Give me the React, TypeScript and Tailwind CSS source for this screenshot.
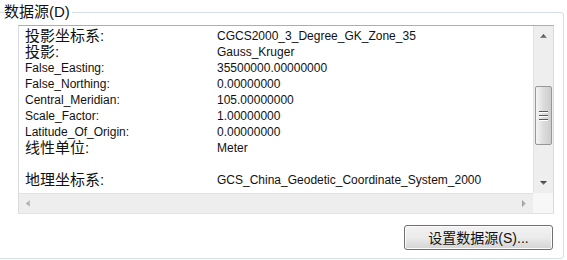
import React from 'react';

const ROWS: { label: string; value: string; cjk?: boolean }[] = [
    { label: '投影坐标系:', value: 'CGCS2000_3_Degree_GK_Zone_35', cjk: true },
    { label: '投影:', value: 'Gauss_Kruger', cjk: true },
    { label: 'False_Easting:', value: '35500000.00000000' },
    { label: 'False_Northing:', value: '0.00000000' },
    { label: 'Central_Meridian:', value: '105.00000000' },
    { label: 'Scale_Factor:', value: '1.00000000' },
    { label: 'Latitude_Of_Origin:', value: '0.00000000' },
    { label: '线性单位:', value: 'Meter', cjk: true },
    { label: '', value: '' },
    { label: '地理坐标系:', value: 'GCS_China_Geodetic_Coordinate_System_2000', cjk: true },
];

const Arrow: React.FC<{ dir: 'up' | 'down' | 'left' | 'right' }> = ({ dir }) => {
    const pts = {
        up: '0,4 7,4 3.5,0',
        down: '0,0 7,0 3.5,4',
        left: '4,0 4,7 0,3.5',
        right: '0,0 0,7 4,3.5',
    }[dir];
    const vertical = dir === 'up' || dir === 'down';
    return (
        <svg width={vertical ? 7 : 4} height={vertical ? 4 : 7} viewBox={vertical ? '0 0 7 4' : '0 0 4 7'}>
            <defs>
                <linearGradient id={`g-${dir}`} x1="0" y1="0" x2={vertical ? '0' : '1'} y2={vertical ? '1' : '0'}>
                    <stop offset="0" stopColor={dir === 'left' || dir === 'right' ? '#9a9a9a' : '#3c3c3c'} />
                    <stop offset="1" stopColor={dir === 'left' || dir === 'right' ? '#c4c4c4' : '#8a8a8a'} />
                </linearGradient>
            </defs>
            <polygon points={pts} fill={`url(#g-${dir})`} />
        </svg>
    );
};

const App: React.FC = () => {
    return (
        <div
            className="w-[567px] h-[260px] bg-white pt-[12px] overflow-hidden text-[#111]"
            style={{ fontFamily: '"Liberation Sans", "Noto Sans CJK SC", sans-serif' }}
        >
            {/* Group box */}
            <div className="relative w-[567px] h-[247px] -ml-[3px] border border-[#d5dfe5] rounded-[3px] pl-[20px] pt-[12px]">
                <div className="absolute left-[6px] -top-[11px] bg-white pr-[2px] text-[15px] leading-[20px] text-[#111]">
                    数据源(D)
                </div>

                {/* List text box */}
                <div className="w-[536px] h-[189px] border border-[#abadb3] border-l-[#d9dae0] border-r-[#d9dae0] border-b-[#dde3ea] flex flex-col bg-white">
                    <div className="flex flex-1 min-h-0">
                        <div className="flex-1 overflow-hidden pl-[6px] pt-[2px] text-[12px]">
                            {ROWS.map((r, i) => (
                                <div key={i} className="flex h-[16px] items-center whitespace-nowrap">
                                    <span className={`w-[192px] shrink-0 ${r.cjk ? 'text-[15px]' : 'text-[12px]'}`}>{r.label}</span>
                                    <span className="text-[12px]">{r.value}</span>
                                </div>
                            ))}
                        </div>
                        {/* Vertical scrollbar */}
                        <div className="w-[20px] flex flex-col bg-[#eeeeee] border-l border-[#e2e2e2]">
                            <div className="h-[20px] flex items-center justify-center">
                                <Arrow dir="up" />
                            </div>
                            <div className="mt-[40px] h-[59px] mx-[1px] rounded-[2px] border border-[#979797] bg-gradient-to-r from-[#f4f4f4] via-[#dcdcdc] to-[#cdcdcd] flex flex-col items-center justify-center gap-[2px]">
                                <div className="w-[9px] h-[2px] border-t border-[#5a5a5a] border-b-[#ffffff] border-b" />
                                <div className="w-[9px] h-[2px] border-t border-[#5a5a5a] border-b-[#ffffff] border-b" />
                                <div className="w-[9px] h-[2px] border-t border-[#5a5a5a] border-b-[#ffffff] border-b" />
                            </div>
                            <div className="flex-1" />
                            <div className="h-[20px] flex items-center justify-center">
                                <Arrow dir="down" />
                            </div>
                        </div>
                    </div>
                    {/* Horizontal scrollbar */}
                    <div className="h-[20px] flex">
                        <div className="flex-1 flex items-center justify-between bg-[#eeeeee] border-t border-[#e2e2e2] px-[7px]">
                            <Arrow dir="left" />
                            <Arrow dir="right" />
                        </div>
                        <div className="w-[20px] bg-[#f7f7f7]" />
                    </div>
                </div>

                {/* Button */}
                <div className="w-[536px] flex justify-end pr-[1px] mt-[11px]">
                    <button className="w-[149px] h-[25px] rounded-[3px] border border-[#707070] bg-gradient-to-b from-[#f2f2f2] via-[#ebebeb] to-[#d4d4d4] text-[14px] leading-none text-[#111] shadow-[inset_0_0_0_1px_#fcfcfc]">
                        设置数据源(S)...
                    </button>
                </div>
            </div>
        </div>
    );
};

export default App;
